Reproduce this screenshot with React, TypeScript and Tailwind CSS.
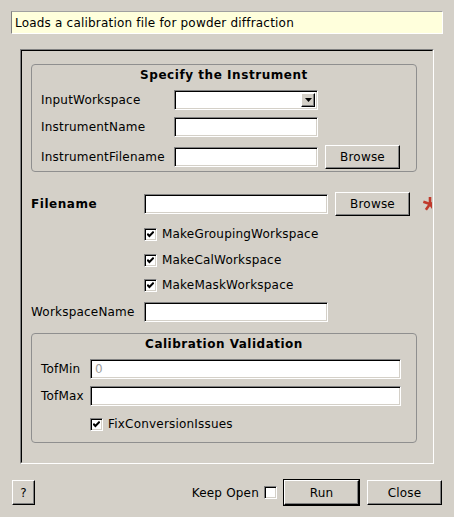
import React from "react";

const sunken =
  "border border-t-[#808080] border-l-[#808080] border-b-white border-r-white shadow-[inset_1px_1px_0_#000,inset_-1px_-1px_0_#d4d0c8] bg-white";
const raised =
  "border border-t-white border-l-white border-b-black border-r-black shadow-[inset_-1px_-1px_0_#808080] bg-[#d4d0c8] flex items-center justify-center shrink-0";

function TextBox({ w, placeholder }: { w: string; placeholder?: string }) {
  return (
    <div className={`${sunken} ${w} h-[20px] shrink-0 flex items-center pl-[4px] text-[#a0a0a0]`}>
      {placeholder}
    </div>
  );
}

function Button({ w, h, label }: { w: string; h: string; label: string }) {
  return <div className={`${raised} ${w} ${h}`}>{label}</div>;
}

function Check({ checked }: { checked: boolean }) {
  return (
    <div className={`${sunken} w-[13px] h-[13px] shrink-0 flex items-center justify-center`}>
      {checked && (
        <svg width="7" height="7" viewBox="0 0 7 7" className="block">
          <path d="M0.3 2.8 L2.4 5 L6.7 0.6" stroke="#000" strokeWidth="2" fill="none" />
        </svg>
      )}
    </div>
  );
}

function Combo() {
  return (
    <div className={`${sunken} w-[144px] h-[20px] shrink-0 flex justify-end p-[2px]`}>
      <div className={`${raised} w-[14px] h-full`}>
        <svg width="7" height="4" viewBox="0 0 7 4" className="block">
          <polygon points="0,0 7,0 3.5,4" fill="#000" />
        </svg>
      </div>
    </div>
  );
}

function Star() {
  const arms = [90, 162, 234, 306, 18].map((a) => {
    const r = (a * Math.PI) / 180;
    return [7 * Math.cos(r), -7 * Math.sin(r)];
  });
  return (
    <svg width="16" height="16" viewBox="-8 -8 16 16" className="block shrink-0 ml-[12px]">
      {arms.map(([x, y], i) => (
        <line key={i} x1="0" y1="0" x2={x} y2={y} stroke="#c0392b" strokeWidth="2.6" />
      ))}
    </svg>
  );
}

function CheckRow({ label, mt, indent }: { label: string; mt: string; indent: string }) {
  return (
    <div className={`flex items-center h-[20px] ${mt} ${indent}`}>
      <Check checked />
      <span className="ml-[5px]">{label}</span>
    </div>
  );
}

export default function App() {
  return (
    <div className="w-[454px] h-[517px] bg-[#d4d0c8] flex flex-col text-[12px] tracking-[0.2px] text-black font-['DejaVu_Sans',sans-serif] overflow-hidden">
      {/* description */}
      <div className="mt-[11px] mx-[11px] h-[23px] bg-[#ffffdc] border border-t-[#a0a0a0] border-l-[#808080] border-b-white border-r-white flex items-center pl-[3px]">
        Loads a calibration file for powder diffraction
      </div>

      {/* frame */}
      <div className="mt-[15px] ml-[20px] w-[414px] h-[415px] border border-t-[#808080] border-l-[#808080] border-r-white border-b-white">
        <div className="h-full border border-t-black border-l-black border-r-[#d4d0c8] border-b-[#d4d0c8] overflow-hidden">
          <div className="pl-[9px] pt-[13px] flex flex-col">
            {/* group 1 */}
            <div className="w-[386px] h-[108px] border border-[#8f8f8f] rounded-[4px] flex flex-col">
              <div className="mt-[3px] h-[15px] leading-[15px] text-center font-bold tracking-[0.55px]">Specify the Instrument</div>
              <div className="mt-[7px] pl-[9px] flex flex-col">
                <div className="flex items-center h-[20px]">
                  <span className="w-[133px] shrink-0">InputWorkspace</span>
                  <Combo />
                </div>
                <div className="flex items-center h-[20px] mt-[7px]">
                  <span className="w-[133px] shrink-0">InstrumentName</span>
                  <TextBox w="w-[144px]" />
                </div>
                <div className="flex items-center h-[24px] mt-[8px]">
                  <span className="w-[133px] shrink-0">InstrumentFilename</span>
                  <TextBox w="w-[144px]" />
                  <div className="ml-[7px]">
                    <Button w="w-[75px]" h="h-[24px]" label="Browse" />
                  </div>
                </div>
              </div>
            </div>

            {/* filename */}
            <div className="flex items-center h-[24px] mt-[20px] w-[420px]">
              <span className="w-[113px] shrink-0 font-bold tracking-[0.55px]">Filename</span>
              <TextBox w="w-[184px]" />
              <div className="ml-[7px]">
                <Button w="w-[75px]" h="h-[24px]" label="Browse" />
              </div>
              <Star />
            </div>

            <CheckRow label="MakeGroupingWorkspace" mt="mt-[8px]" indent="pl-[113px]" />
            <CheckRow label="MakeCalWorkspace" mt="mt-[6px]" indent="pl-[113px]" />
            <CheckRow label="MakeMaskWorkspace" mt="mt-[5px]" indent="pl-[113px]" />

            <div className="flex items-center h-[20px] mt-[7px]">
              <span className="w-[113px] shrink-0">WorkspaceName</span>
              <TextBox w="w-[184px]" />
            </div>

            {/* group 2 */}
            <div className="mt-[11px] w-[386px] h-[110px] border border-[#8f8f8f] rounded-[4px] flex flex-col">
              <div className="mt-[3px] h-[15px] leading-[15px] text-center font-bold tracking-[0.5px]">Calibration Validation</div>
              <div className="mt-[7px] pl-[9px] flex flex-col">
                <div className="flex items-center h-[20px]">
                  <span className="w-[49px] shrink-0">TofMin</span>
                  <TextBox w="w-[311px]" placeholder="0" />
                </div>
                <div className="flex items-center h-[20px] mt-[7px]">
                  <span className="w-[49px] shrink-0">TofMax</span>
                  <TextBox w="w-[311px]" />
                </div>
                <CheckRow label="FixConversionIssues" mt="mt-[8px]" indent="pl-[49px]" />
              </div>
            </div>
          </div>
        </div>
      </div>

      {/* bottom bar */}
      <div className="mt-[15px] h-[27px] flex items-center">
        <div className="ml-[12px]">
          <Button w="w-[23px]" h="h-[25px]" label="?" />
        </div>
        <div className="flex-1" />
        <span>Keep Open</span>
        <div className="ml-[5px]">
          <Check checked={false} />
        </div>
        <div className="ml-[6px] border border-black">
          <Button w="w-[75px]" h="h-[25px]" label="Run" />
        </div>
        <div className="ml-[7px] mr-[12px]">
          <Button w="w-[75px]" h="h-[25px]" label="Close" />
        </div>
      </div>
    </div>
  );
}
